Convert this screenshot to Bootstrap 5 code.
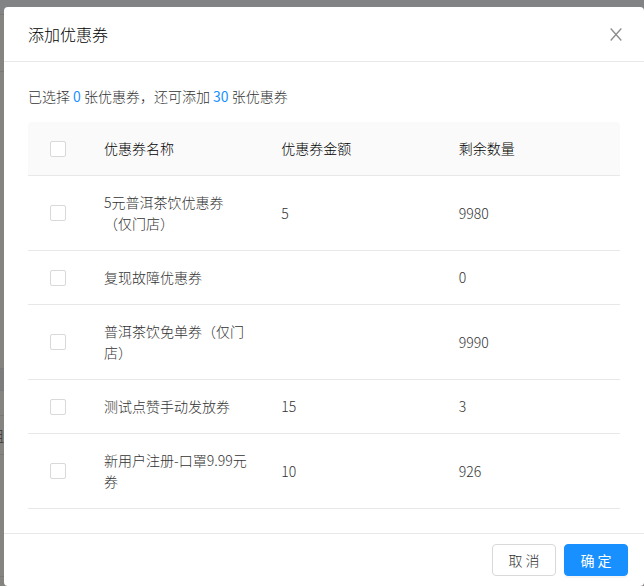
<!DOCTYPE html>
<html lang="zh-CN">
<head>
<meta charset="utf-8">
<meta name="viewport" content="width=device-width, initial-scale=1">
<title>添加优惠券</title>
<link href="https://cdn.jsdelivr.net/npm/bootstrap@5.3.0/dist/css/bootstrap.min.css" rel="stylesheet">
<style>
  body { font: 14px/21px "Noto Sans CJK SC", sans-serif; font-weight: 300; color: #333; background: #868481; }
  .stage > * { grid-area: 1 / 1; }
  .under-page { background: #868481; color: #333; overflow: hidden; }
  .under-page > div { border-bottom: 1px solid #7b7977; flex: none; }
  .under-top { height: 15px; background: #828385; }
  .under-a { height: 57px; }
  .under-b { height: 297px; }
  .under-c { height: 22px; background: #7d7d7d; }
  .under-d { height: 25px; }
  .under-e { height: 39px; padding-top: 9px; }
  .under-e span { margin-left: -10px; }
  .under-f { height: 122px; }
  .dialog-wrap { padding: 7px 0 0 4px; }
  .dialog-box { background: #fff; border-radius: 4px; min-width: 0; }
  .dialog-head { padding: 16px 20px 16px 24px; border-bottom: 1px solid #e8e8e8; }
  .dialog-title { font-size: 16px; line-height: 22px; font-weight: 300; color: #000; }
  .close-btn { width: 16px; height: 22px; color: #8c8c8c; }
  .dialog-body { padding: 24px; }
  .summary { margin-bottom: 15px; }
  .summary b { color: #1890ff; font-weight: 400; }
  .coupon-table { --bs-table-bg: transparent; table-layout: fixed; color: inherit; border-color: #e8e8e8; border-collapse: separate; border-spacing: 0; }
  .coupon-table > :not(caption) > * > * { padding: 16px; border-bottom: 1px solid #e8e8e8; vertical-align: middle; }
  .coupon-table > thead > tr > th { background: #fafafa; color: #000; font-weight: 300; }
  .coupon-table th:first-child { border-top-left-radius: 4px; }
  .coupon-table th:last-child { border-top-right-radius: 4px; }
  .coupon-table > :not(caption) > * > .pick { width: 60px; padding-left: 22px; padding-right: 22px; }
  .coupon-table .form-check-input { width: 16px; height: 16px; border: 1px solid #d9d9d9; border-radius: 2px; }
  .dialog-foot { padding: 10px 16px; border-top: 1px solid #e8e8e8; }
  .dialog-foot .btn { min-width: 64px; height: 32px; padding: 0 14px; font-size: 14px; line-height: 28px; border-radius: 4px; }
  .btn-cancel { border-color: #d9d9d9; color: #333; background: #fff; font-weight: 300; }
  .btn-ok { border-color: #1890ff; color: #fff; background: #1890ff; box-shadow: 0 2px 0 rgba(0,0,0,.04); }
</style>
<script src="https://cdn.jsdelivr.net/npm/bootstrap@5.3.0/dist/js/bootstrap.bundle.min.js"></script>
</head>
<body>
<div class="stage d-grid min-vh-100">
  <div class="under-page d-flex flex-column" aria-hidden="true">
    <div class="under-top"></div>
    <div class="under-a"></div>
    <div class="under-b"></div>
    <div class="under-c"></div>
    <div class="under-d"></div>
    <div class="under-e"><span>组</span></div>
    <div class="under-f"></div>
  </div>
  <div class="dialog-wrap d-flex">
    <section class="dialog-box d-flex flex-column flex-fill" role="dialog" aria-labelledby="dlgTitle">
      <header class="dialog-head d-flex align-items-center justify-content-between">
        <h1 class="dialog-title m-0" id="dlgTitle">添加优惠券</h1>
        <button type="button" class="close-btn btn border-0 p-0 d-flex align-items-end pb-1 justify-content-center" aria-label="关闭">
          <svg width="12" height="13" viewBox="0 0 12 13" fill="none" stroke="currentColor" stroke-width="1.3" aria-hidden="true"><path d="M.7.5 11.3 12.5M11.3.5.7 12.5"/></svg>
        </button>
      </header>
      <div class="dialog-body flex-fill">
        <p class="summary">已选择 <b>0</b> 张优惠券，还可添加 <b>30</b> 张优惠券</p>
        <table class="table coupon-table align-middle mb-0">
          <thead>
            <tr>
              <th class="pick" scope="col"><input class="form-check-input d-block m-0" type="checkbox" aria-label="全选"></th>
              <th scope="col">优惠券名称</th><th scope="col">优惠券金额</th><th scope="col">剩余数量</th>
            </tr>
          </thead>
          <tbody>
            <tr><td class="pick"><input id="c1" class="form-check-input d-block m-0" type="checkbox"></td><td><label for="c1">5元普洱茶饮优惠券（仅门店）</label></td><td>5</td><td>9980</td></tr>
            <tr><td class="pick"><input id="c2" class="form-check-input d-block m-0" type="checkbox"></td><td><label for="c2">复现故障优惠券</label></td><td></td><td>0</td></tr>
            <tr><td class="pick"><input id="c3" class="form-check-input d-block m-0" type="checkbox"></td><td><label for="c3">普洱茶饮免单券（仅门店）</label></td><td></td><td>9990</td></tr>
            <tr><td class="pick"><input id="c4" class="form-check-input d-block m-0" type="checkbox"></td><td><label for="c4">测试点赞手动发放券</label></td><td>15</td><td>3</td></tr>
            <tr><td class="pick"><input id="c5" class="form-check-input d-block m-0" type="checkbox"></td><td><label for="c5">新用户注册-口罩9.99元券</label></td><td>10</td><td>926</td></tr>
          </tbody>
        </table>
      </div>
      <footer class="dialog-foot d-flex justify-content-end gap-2">
        <button type="button" class="btn btn-cancel">取 消</button>
        <button type="button" class="btn btn-ok">确 定</button>
      </footer>
    </section>
  </div>
</div>
</body>
</html>
